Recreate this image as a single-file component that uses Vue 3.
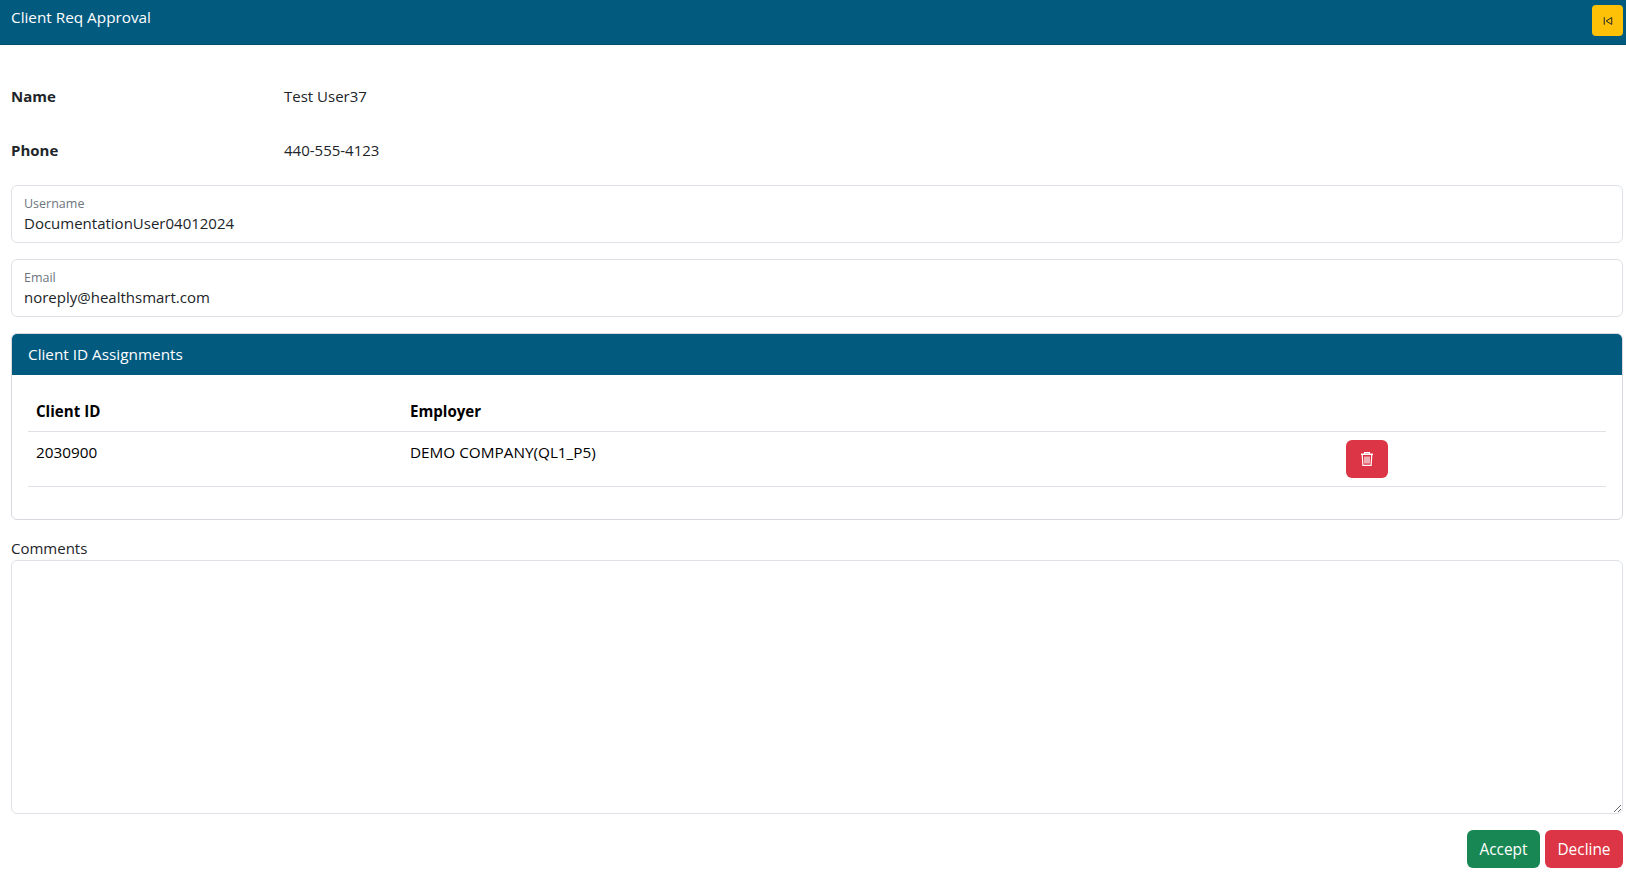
<script setup>
const rows = [{ id: '2030900', employer: 'DEMO COMPANY(QL1_P5)' }]
</script>

<template>
  <div class="page">
    <header class="topbar">
      <span class="title">Client Req Approval</span>
      <button class="collapse" type="button" aria-label="Collapse">
        <svg width="10" height="10" viewBox="0 0 16 16" fill="none" stroke="#212529" stroke-width="1.6">
          <path d="M2 2v12" />
          <path d="M14 2.5v11L5 8z" />
        </svg>
      </button>
    </header>

    <main class="content">
      <div class="info-row">
        <div class="info-label">Name</div>
        <div class="info-value">Test User37</div>
      </div>
      <div class="info-row">
        <div class="info-label">Phone</div>
        <div class="info-value">440-555-4123</div>
      </div>

      <div class="field">
        <div class="field-label">Username</div>
        <div class="field-value">DocumentationUser04012024</div>
      </div>
      <div class="field">
        <div class="field-label">Email</div>
        <div class="field-value">noreply@healthsmart.com</div>
      </div>

      <section class="card">
        <div class="card-header">Client ID Assignments</div>
        <div class="card-body">
          <table class="table">
            <thead>
              <tr>
                <th class="col-id">Client ID</th>
                <th class="col-emp">Employer</th>
                <th></th>
              </tr>
            </thead>
            <tbody>
              <tr v-for="r in rows" :key="r.id">
                <td>{{ r.id }}</td>
                <td>{{ r.employer }}</td>
                <td>
                  <button class="trash" type="button" aria-label="Delete">
                    <svg width="16" height="16" viewBox="0 0 16 16" fill="none" stroke="#fff" stroke-width="1.2">
                      <path d="M2 3.2h12" stroke-width="1.4" />
                      <path d="M5.6 3V1.6h4.8V3" />
                      <path d="M3.2 3.4l.7 11h8.2l.7-11" />
                      <path d="M6 5.5v7M8 5.5v7M10 5.5v7" />
                    </svg>
                  </button>
                </td>
              </tr>
            </tbody>
          </table>
        </div>
      </section>

      <label class="comments-label" for="comments">Comments</label>
      <textarea id="comments" class="comments"></textarea>

      <div class="actions">
        <button class="btn accept" type="button">Accept</button>
        <button class="btn decline" type="button">Decline</button>
      </div>
    </main>
  </div>
</template>

<style>
html, body { margin: 0; background: #fff; overflow: hidden; }
</style>

<style scoped>
.page {
  font-family: "Open Sans", "Noto Sans", sans-serif;
  font-size: 15px;
  color: #212529;
  height: 874px;
  display: flex;
  flex-direction: column;
}
.topbar {
  height: 45px;
  flex: none;
  box-sizing: border-box;
  background: #035a7f;
  border-bottom: 1px solid #024e6f;
  color: #fff;
  display: flex;
  justify-content: space-between;
  align-items: flex-start;
  padding: 5px 3px 0 11px;
}
.title { line-height: 25px; font-size: 15.3px; }
.collapse {
  width: 31px;
  height: 31px;
  padding: 0;
  border: 0;
  border-radius: 4px;
  background: #ffc107;
  display: flex;
  align-items: center;
  justify-content: center;
}
.content {
  padding: 0 3px 0 11px;
  display: flex;
  flex-direction: column;
  flex: 1;
}
.info-row {
  display: flex;
  height: 54px;
  align-items: center;
}
.info-row:first-child { margin-top: 24px; }
.info-label { width: 273px; font-weight: 700; }
.field {
  box-sizing: border-box;
  height: 58px;
  border: 1px solid #dee2e6;
  border-radius: 6px;
  padding: 9px 12px 0;
  margin-bottom: 16px;
}
.info-row + .field { margin-top: 8px; }
.field-label { font-size: 12.5px; line-height: 17px; color: #6c757d; }
.field-value { line-height: 22px; }
.card {
  box-sizing: border-box;
  height: 187px;
  border: 1px solid #d5d8dc;
  border-radius: 6px;
  overflow: hidden;
  flex: none;
}
.card-header {
  height: 41px;
  box-sizing: border-box;
  background: #035a7f;
  color: #fff;
  padding: 0 16px;
  line-height: 41px;
  font-size: 15.3px;
}
.card-body { padding: 17px 16px 0; }
.table {
  width: 100%;
  border-collapse: collapse;
  table-layout: fixed;
  color: #000;
  font-size: 15.3px;
}
.table th {
  text-align: left;
  font-weight: 700;
  font-size: 15.1px;
  height: 39px;
  box-sizing: border-box;
  padding: 0 8px;
  border-bottom: 1px solid #dee2e6;
}
.table td {
  padding: 8px;
  height: 55px;
  box-sizing: border-box;
  vertical-align: top;
  border-bottom: 1px solid #dee2e6;
  line-height: 25px;
}
.col-id { width: 374px; box-sizing: border-box; }
.col-emp { width: 936px; box-sizing: border-box; }
.trash {
  display: flex;
  align-items: center;
  justify-content: center;
  width: 42px;
  height: 38px;
  padding: 0;
  border: 0;
  border-radius: 6px;
  background: #dc3545;
}
.comments-label { margin-top: 17px; line-height: 22px; }
.comments {
  display: block;
  box-sizing: border-box;
  width: 100%;
  height: 254px;
  margin-top: 1px;
  border: 1px solid #dee2e6;
  border-radius: 6px;
  outline: none;
  flex: none;
}
.actions {
  display: flex;
  justify-content: flex-end;
  gap: 5px;
  margin-top: 16px;
}
.btn {
  height: 38px;
  padding: 0 12.5px;
  border: 0;
  border-radius: 6px;
  color: #fff;
  font: inherit;
  font-size: 15.4px;
}
.accept { background: #198754; }
.decline { background: #dc3545; }
</style>
